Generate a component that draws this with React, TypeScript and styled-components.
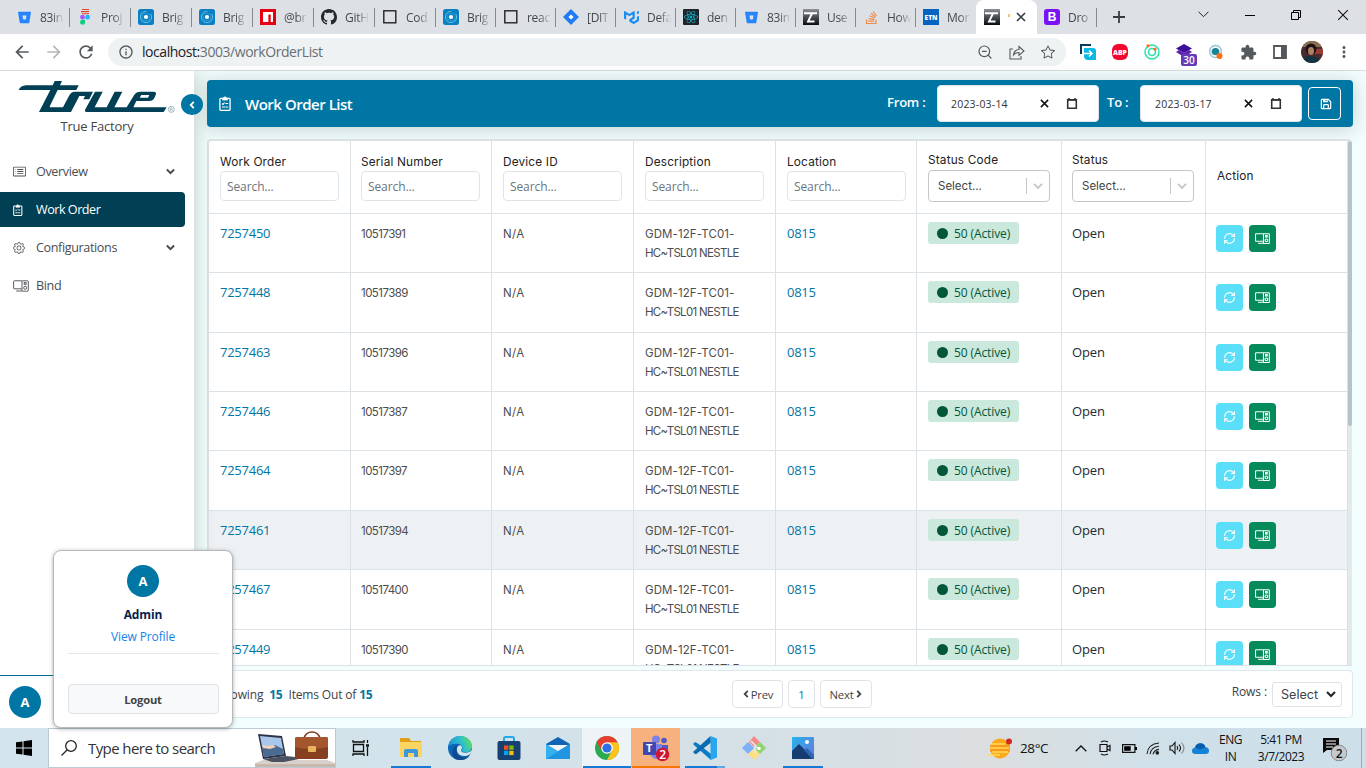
import React from "react";
import styled, { createGlobalStyle } from "styled-components";
import { BsCardList, BsGear, BsGithub, BsStar } from "react-icons/bs";
import { BiSave } from "react-icons/bi";
import { FaReact, FaStackOverflow } from "react-icons/fa";
import { LuRefreshCw, LuZoomOut } from "react-icons/lu";
import { MdArrowBack, MdArrowForward, MdRefresh, MdInfoOutline, MdExtension, MdMoreVert } from "react-icons/md";
import { SiBitbucket, SiMui } from "react-icons/si";

const GlobalStyle = createGlobalStyle`
  * { box-sizing: border-box; }
  body { margin: 0; font-family: "Open Sans", "Noto Sans", sans-serif; overflow: hidden; }
  button, input, select { font-family: inherit; margin: 0; }
  svg { display: block; flex: none; }
`;

const teal = "#0076a5";
const navy = "#003f54";
const line = "#dbe1e5";

const Screen = styled.div`
  width: 1366px; height: 768px; display: flex; flex-direction: column; overflow: hidden; background: #fff;
`;

/* ---------- browser ---------- */
const TabStrip = styled.div`
  height: 34px; flex: none; background: #dde0e5; display: flex; padding-left: 9px;
`;
const Tab = styled.div<{ $w: number; $active?: boolean; $line?: boolean }>`
  width: ${p => p.$w}px; height: 34px; display: flex; align-items: center; gap: 8px; padding-left: 7px;
  position: relative;
  ${p => p.$active && "background:#fff; border-radius: 8px 8px 0 0; padding-left: 8px;"}
  ${p => p.$line && `&::after { content: ""; position: absolute; right: 0; top: 8px; width: 1px; height: 19px; background: #85898e; }`}
`;
const TabTitle = styled.span`
  width: max-content; flex: none; white-space: nowrap; font-size: 12px; letter-spacing: -0.3px; color: #45494d;
  mask-image: linear-gradient(90deg, #000 12px, transparent 24px);
`;
const Fav = styled.span`
  width: 16px; height: 16px; display: flex; align-items: center; justify-content: center; flex: none;
`;
const EtnFav = styled(Fav)`background: #0664c1; color: #fff; font-size: 6.5px; font-weight: 800;`;
const BootFav = styled(Fav)`background: #7a12f5; color: #fff; font: 700 12px "Liberation Sans", sans-serif; border-radius: 3px;`;
const TabClose = styled.span`display: flex; margin-left: -3px;`;
const WinControls = styled.div`
  margin-left: auto; display: flex; height: 29px; align-items: center; padding-right: 17px; gap: 36px;
`;
const NewTab = styled.div`display: flex; align-items: center; padding-left: 16px;`;
const Toolbar = styled.div`
  height: 37px; flex: none; display: flex; align-items: center; background: #fff; border-bottom: 1px solid #d9dcdf;
  padding-left: 12px; color: #55595e;
`;
const NavIcons = styled.div`display: flex; gap: 12px; width: 96px;`;
const Omnibox = styled.div`
  width: 958px; height: 28px; border-radius: 14px; background: #eef2f3; display: flex; align-items: center; padding: 0 11px 0 10px;
  font-size: 14px;
`;
const Url = styled.span`margin: -1px 0 0 8px; color: #6a6f74; letter-spacing: -0.45px; flex: 1; b { font-weight: 400; color: #202124; }`;
const OmniIcons = styled.div`display: flex; gap: 16px; align-items: center;`;
const ExtRow = styled.div`display: flex; align-items: center; gap: 16px; margin-left: 14px;`;
const Abp = styled.span`
  width: 16px; height: 16px; border-radius: 6px; background: #f5062e; color: #fff; font-size: 6.8px; font-weight: 800;
  display: flex; align-items: center; justify-content: center;
`;
const LayerExt = styled.span`position: relative; width: 16px; height: 16px;`;
const ExtBadge = styled.span`
  position: absolute; left: 5px; top: 10px; width: 16px; height: 12px; background: #673ab7; color: #fff; font-size: 10px;
  font-weight: 600; line-height: 12px; text-align: center; border-radius: 2px;
`;
const Face = styled.span`
  width: 22px; height: 22px; border-radius: 50%; overflow: hidden; margin-left: -2px;
`;
const More = styled.span`margin-left: -4px;`;

/* ---------- app ---------- */
const AppArea = styled.div`height: 657px; flex: none; display: flex; background: #f2fdfd; position: relative;`;
const Sidebar = styled.aside`
  width: 194px; background: #fff; display: flex; flex-direction: column; box-shadow: 0 0 18px rgba(60, 80, 70, 0.3);
  position: relative; clip-path: inset(0 -40px 0 0);
`;
const LogoBox = styled.div`padding: 5px 0 0 12px; height: 46px;`;
const Factory = styled.div`text-align: center; font-size: 13px; line-height: 18px; color: #444; letter-spacing: -0.22px;`;
const Collapse = styled.button`
  position: absolute; left: 181px; top: 23px; width: 22px; height: 21px; border: 0; border-radius: 50%; background: ${teal};
  color: #fff; display: flex; align-items: center; justify-content: center; padding: 0; z-index: 2;
`;
const Nav = styled.nav`display: flex; flex-direction: column; gap: 3px; margin-top: 19px; flex: 1;`;
const NavItem = styled.a<{ $active?: boolean }>`
  height: 35px; width: 185px; display: flex; align-items: center; padding: 0 10px 0 13px; font-size: 12.6px;
  letter-spacing: ${p => (p.$active ? -0.48 : -0.38)}px;
  color: ${p => (p.$active ? "#fff" : "#4a4d50")}; background: ${p => (p.$active ? navy : "transparent")};
  border-radius: 0 4px 4px 0;
`;
const NavGlyph = styled.span`width: 23px; display: flex;`;
const NavLabel = styled.span`flex: 1; padding-bottom: 1px;`;
const SideFoot = styled.div`height: 53px; border-top: 1px solid #036c92; padding: 10px 9px;`;
const Avatar = styled.div`
  width: 32px; height: 32px; border-radius: 50%; background: ${teal}; color: #fff; font-weight: 700; font-size: 13px;
  display: flex; align-items: center; justify-content: center;
`;
const Popover = styled.div`
  position: absolute; left: 53px; top: 479px; width: 180px; height: 178px; background: #fff; border: 1px solid #b6b9bb;
  border-radius: 8px; box-shadow: 0 1px 4px rgba(0, 0, 0, 0.3); display: flex; flex-direction: column; align-items: center;
  padding: 14px 14px 0; z-index: 5;
`;
const PopName = styled.div`font-size: 12px; font-weight: 700; color: #0a1f4d; line-height: 18px; margin-top: 9px; letter-spacing: -0.1px;`;
const PopLink = styled.a`
  font-size: 12px; color: #1483ea; line-height: 18px; margin-top: 4px; padding-bottom: 7px; border-bottom: 1px solid #e4e7ea;
  width: 151px; text-align: center; letter-spacing: -0.12px;
`;
const Logout = styled.button`
  margin-top: 30px; width: 151px; height: 30px; border: 1px solid #dfe3e7; border-radius: 4px; background: #f8f9fb;
  font-size: 11.2px; font-weight: 700; color: #444; letter-spacing: -0.2px;
`;
const Main = styled.main`flex: 1; padding: 9px 13px 0; display: flex; flex-direction: column;`;
const Header = styled.header`
  height: 47px; flex: none; background: ${teal}; border-radius: 4px; display: flex; align-items: center; color: #fff;
  padding: 0 12px; box-shadow: 0 2px 18px rgba(60, 80, 70, 0.25); font-size: 15px;
`;
const Title = styled.h1`font-size: 15px; font-weight: 600; margin: 0 auto 0 14px; letter-spacing: -0.48px;`;
const DateLabel = styled.span<{ $w: number }>`width: ${p => p.$w}px; font-size: 13px; font-weight: 600; padding-bottom: 4px; letter-spacing: -0.2px;`;
const DateBox = styled.div<{ $gap: number; $pad: number }>`
  width: 162px; height: 37px; background: #fff; border: 1px solid #dfe5e8; border-radius: 4px; display: flex; align-items: center;
  color: #333; font-size: 10.5px; padding-left: ${p => p.$pad}px; margin-right: ${p => p.$gap}px; letter-spacing: 0.2px;
`;
const DateText = styled.span`width: 89px;`;
const DateIcon = styled.span`margin-left: 17px;`;
const SaveBtn = styled.button`
  width: 33px; height: 33px; border: 1px solid #fff; border-radius: 4px; background: transparent; color: #fff; display: flex;
  align-items: center; justify-content: center; padding: 0 0 0 2px;
`;
const TableCard = styled.div`
  margin: 12px 0 0; width: 1145px; height: 527px; flex: none; overflow: hidden; display: flex; background: #fff;
  border: 1px solid ${line}; border-width: 2px 0 1px 2px; border-radius: 4px 4px 0 0;
`;
const Scroll = styled.div`width: 5px; background: #e3eaec; border-left: 1px solid ${line};`;
const Thumb = styled.div`height: 285px; border-radius: 3px; background: #b5c4cb;`;
const Table = styled.div`flex: none; width: 1138px;`;
const Row = styled.div<{ $h: number; $shade?: boolean }>`
  display: grid; grid-template-columns: 142px 141px 142px 142px 141px 145px 144px 141px; height: ${p => p.$h}px;
  background: ${p => (p.$shade ? "#edf1f4" : "#fff")}; border-bottom: 1px solid ${line};
  & > :first-child, & > :nth-child(n + 3):nth-child(-n + 6) { padding-left: 11px; }
`;
const Cell = styled.div`
  border-right: 1px solid ${line}; padding: 10px 0 0 10px; line-height: 18.5px; font-size: 13px; color: #222b33;
`;
const LinkCell = styled(Cell)`color: ${teal}; letter-spacing: -0.25px;`;
const OpenCell = styled(Cell)`letter-spacing: -0.15px;`;
const GeoCell = styled(Cell)`
  padding-top: 11px; font-family: Inter, sans-serif; font-size: 11.5px; color: #4d4d4d;
`;
const GeoText = styled.div<{ $ls: number }>`letter-spacing: ${p => p.$ls}px; white-space: nowrap;`;
const HeadCell = styled(Cell)<{ $top: number; $last?: boolean }>`
  padding-top: ${p => p.$top}px; font-family: Inter, sans-serif; font-size: 11.8px; color: #222; line-height: 18px;
  letter-spacing: 0.18px;
  ${p => p.$last && "border-right: 0; padding-left: 11px;"}
`;
const Search = styled.div`
  width: 119px; height: 30px; border: 1px solid #e0e4e8; border-radius: 4px; font: 12px/30px "Open Sans", sans-serif;
  color: #6a757d; padding-left: 6px; letter-spacing: -0.1px;
`;
const Picker = styled.div`
  width: 122px; height: 32px; border: 1px solid #c4c6c8; border-radius: 4px; margin-top: 1px; display: flex; align-items: center;
  color: #444; font-size: 11.5px; padding-left: 9px; letter-spacing: 0;
`;
const PickerText = styled.span`flex: 1;`;
const PickerArrow = styled.span`height: 16px; border-left: 1px solid #c4c6c8; width: 23px; display: flex; align-items: center; justify-content: center; color: #c4c6c8;`;
const Badge = styled.span`
  display: flex; align-items: center; gap: 6px; width: 91px; height: 22px; background: #cae8dc; border-radius: 3px; color: #02573a;
  font-size: 12px; padding: 1px 0 0 9px; margin-top: -2px; letter-spacing: -0.1px;
`;
const BadgeText = styled.span`padding-top: 1px;`;
const Dot = styled.i`width: 11px; height: 11px; border-radius: 50%; background: #02573a;`;
const Actions = styled(Cell)`border-right: 0; display: flex; gap: 6px; padding-top: 11px;`;
const ActBtn = styled.button<{ $bg: string }>`
  width: 27px; height: 27px; border: 0; padding: 0; border-radius: 4px; background: ${p => p.$bg}; color: #fff; display: flex;
  align-items: center; justify-content: center;
`;
const FootBar = styled.footer`
  margin-top: 4px; height: 48px; flex: none; background: #fff; border: 1px solid #dfe7ea; border-radius: 4px; display: flex; align-items: center;
  padding: 0 10px 0 9px; font-size: 12px; color: #3c4248;
`;
const Count = styled.div`width: 515px; white-space: pre; letter-spacing: -0.16px; b { color: ${teal}; }`;
const Pager = styled.div`display: flex; gap: 5px; flex: 1;`;
const PageBtn = styled.button<{ $w: number; $c?: string }>`
  width: ${p => p.$w}px; height: 28px; background: #fff; border: 1px solid #e0e4e8; border-radius: 4px; padding: 0; font-size: 11.3px;
  color: ${p => p.$c || "#444"}; display: flex; align-items: center; justify-content: center; gap: 1px; letter-spacing: -0.2px;
`;
const RowsLabel = styled.span`margin: -5px 5px 0 0; font-size: 12px; letter-spacing: -0.1px;`;
const RowsSelect = styled.div`
  width: 70px; height: 25px; border: 1px solid #dfe3e7; border-radius: 3px; display: flex; align-items: center; gap: 8px;
  padding-left: 8px; font: 12.6px Inter, sans-serif; color: #3c4248;
`;

/* ---------- taskbar ---------- */
const Taskbar = styled.div`
  height: 40px; flex: none; display: flex; background: linear-gradient(90deg, #d3e4ed 0%, #d3e2e9 45%, #d6dfe4 62%, #dcdedf 72%, #cfe0e9 85%, #cddfe9 100%);
`;
const Start = styled.div`width: 48px; display: flex; align-items: center; justify-content: center;`;
const SearchBar = styled.div`
  width: 288px; background: #fff; border: 1px solid #bccad1; display: flex; align-items: center; font-size: 15px; color: #333;
  padding-left: 11px; letter-spacing: -0.58px; gap: 10px;
`;
const SearchText = styled.span`flex: 1; white-space: nowrap;`;
const TaskItem = styled.div<{ $w?: number; $bg?: string; $bar?: string; $barW?: number }>`
  width: ${p => p.$w || 49}px; display: flex; align-items: center; justify-content: center; position: relative;
  background: ${p => p.$bg || "transparent"};
  ${p => p.$bar && `&::after { content: ""; position: absolute; bottom: 0; left: calc(50% - ${(p.$barW || 40) / 2}px); width: ${p.$barW || 40}px; height: 2px; background: ${p.$bar}; }`}
`;
const Tray = styled.div`margin-left: auto; display: flex; align-items: center; color: #111; font-size: 12px;`;
const TrayIcon = styled.span<{ $w: number }>`width: ${p => p.$w}px; display: flex; justify-content: center;`;
const Temp = styled.span`font-size: 13.5px; letter-spacing: -0.4px; width: 49px; margin-left: 4px;`;
const TwoLine = styled.div<{ $w: number }>`width: ${p => p.$w}px; text-align: center; line-height: 17px; letter-spacing: -0.45px; font-size: 12px;`;
const ShowDesk = styled.div`width: 5px; height: 40px; border-left: 1px solid #9dabb2; margin-left: 7px;`;

/* ---------- drawings ---------- */
const Ring = () => (
  <svg width="16" height="16" viewBox="0 0 16 16">
    <rect width="16" height="16" rx="2.5" fill="#0a7fc2" />
    <circle cx="8" cy="8" r="5.6" fill="none" stroke="#6cc3ea" strokeWidth=".9" strokeDasharray="26 5" />
    <circle cx="8" cy="8" r="3.8" fill="none" stroke="#2f9fd6" strokeWidth=".8" />
    <circle cx="8" cy="8" r="2.1" fill="#fff" />
  </svg>
);
const Figma = () => (
  <svg width="12" height="16" viewBox="0 0 12 16">
    <path d="M3 .5h7M2 2.6h8M3 4.7h7" stroke="#e2432a" strokeWidth="1.1" />
    <circle cx="3.5" cy="8.2" r="2.4" fill="#a259ff" /><circle cx="8.6" cy="8.2" r="2.4" fill="#1abcfe" />
    <path d="M3.5 10.8H6v2.6a2.5 2.5 0 1 1-2.5-2.6z" fill="#0acf83" />
  </svg>
);
const Npm = () => (
  <svg width="16" height="16" viewBox="0 0 16 16"><rect width="16" height="16" fill="#e60012" /><path d="M3 3h10v10h-2.3V5.6H8.4V13H3z" fill="#fff" /></svg>
);
const Square = () => (
  <svg width="16" height="16" viewBox="0 0 16 16"><rect x="1.8" y="1.8" width="12" height="12" fill="none" stroke="#222" strokeWidth="1.4" /></svg>
);
const Jira = () => (
  <svg width="16" height="16" viewBox="0 0 16 16"><path d="M8 0l8 8-8 8-8-8z" fill="#1f7cf5" /><path d="M8 5.4L10.6 8 8 10.6 5.4 8z" fill="#fff" /></svg>
);
const Zee = () => (
  <svg width="16" height="16" viewBox="0 0 16 16">
    <defs><linearGradient id="zg" x1="0" y1="0" x2="0" y2="1"><stop offset="0" stopColor="#8d9195" /><stop offset="1" stopColor="#080b10" /></linearGradient></defs>
    <rect width="16" height="16" fill="url(#zg)" /><path d="M1 4.3h13M9.5 3.5L5 12.5h6.5" fill="none" stroke="#fff" strokeWidth="1.9" />
  </svg>
);
const ReactFav = () => (
  <svg width="16" height="16" viewBox="0 0 16 16"><rect width="16" height="16" rx="1" fill="#20232a" /><g transform="translate(1 1)"><FaReact size={14} color="#12b5c9" /></g></svg>
);

const TrueLogo = () => (
  <svg width="170" height="42" viewBox="0 0 510 126">
    <path d="M20 42Q26 29 42 28H122L128 15H150L144 28H200L193 42H137L114 89Q111 94 118 94H153L172 58Q177 48 188 47H243L232 70H214L219 60H202L177 108H81L115 42Z" fill={navy} />
    <path d="M249 47H272L248 94H284L308 47H331L307 94H344L367 56Q373 47 385 47H424Q435 47 431 57L427 66Q423 75 411 75H373L364 94H464L455 108H224Q216 108 220 100Z" fill={navy} />
    <path d="M383 65L388 57H412L408 65Z" fill="#fff" />
    <circle cx="478" cy="100" r="9" fill="none" stroke="#6b929f" strokeWidth="2" />
    <path d="M475 105v-9h4q3 2 0 4h-4m4 0l3 5" fill="none" stroke="#6b929f" strokeWidth="1.6" />
  </svg>
);
const Clipboard = ({ h }: { h: number }) => (
  <svg width={h * 0.8} height={h} viewBox="0 0 12 15" fill="none" stroke="currentColor" strokeWidth="1.3">
    <path d="M3 2.4H1.700Q.9 2.400.9 3.200V13.500Q.9 14.300 1.700 14.300H10.300Q11.100 14.300 11.100 13.500V3.200Q11.100 2.400 10.300 2.400H9" />
    <path d="M3.600 1.800H5L6 .600 7 1.800H8.400V4H3.600z" fill="currentColor" strokeWidth=".8" />
    <path d="M3 7.600l1 .8 1.600-1.900M6.400 7.500H9.200M3 11h3M6.400 11H9.200" strokeWidth="1.100" />
  </svg>
);
const Chev = ({ dir, s }: { dir: "left" | "right" | "down"; s: number }) => (
  <svg width={s} height={s} viewBox="0 0 8 8">
    <path d={dir === "left" ? "M5.800.900L2.700 4l3.100 3.100" : dir === "right" ? "M2.200.900L5.300 4 2.200 7.100" : "M.800 2.300L4 5.500l3.200-3.200"} fill="none" stroke="currentColor" strokeWidth="1.800" />
  </svg>
);
const PcIcon = ({ w = 16, heavy = false }: { w?: number; heavy?: boolean }) => (
  <svg width={w} height={w * 0.75} viewBox="0 0 16 12" fill="none" stroke="currentColor" strokeWidth={heavy ? 1.1 : 0.9}>
    <path d="M8.800 8.800H1.200Q.6 8.800.6 8.200V1.400Q.6.8 1.200.8H9M3.200 11H9" />
    <rect x="9" y=".8" width="6.3" height="10.4" rx=".6" /><rect x="11.2" y="2.6" width="1.9" height="1.700" /><circle cx="12.15" cy="7.800" r="1.500" />
  </svg>
);
const Cross = ({ s, c, w = 1.3 }: { s: number; c: string; w?: number }) => (
  <svg width={s} height={s} viewBox="0 0 10 10"><path d="M1 1l8 8M9 1L1 9" stroke={c} strokeWidth={w} /></svg>
);
const CalIcon = () => (
  <svg width="12" height="12" viewBox="0 0 12 12"><path d="M1.700 1.700h8.600v8.600H1.700z" fill="none" stroke="#333" strokeWidth="1.600" /><path d="M1 2h10M3 0v2M9 0v2" stroke="#333" strokeWidth="1.500" /></svg>
);
const LogoBag = () => (
  <svg width="80" height="38" viewBox="0 0 80 38">
    <path d="M0 34L8 31H72L80 34V38H0z" fill="#d9d0c9" /><path d="M0 35h80v3H0z" fill="#c6b8ad" />
    <path d="M3 5L27 7 31 27 8 30z" fill="#2e3346" /><path d="M5 7L26 9 29 25 9 28z" fill="#a9c7ea" />
    <path d="M7 17l7 2 6-3 8 4 1 5-20 3z" fill="#4a6a91" /><path d="M7 16l6 1 5-1 3 2-6 2-7-1z" fill="#f0d2bd" />
    <path d="M8 30l23-3 18 2-20 4H17z" fill="#4b5160" />
    <path d="M49 9q2-6 8-6t8 6" fill="none" stroke="#7a3a20" strokeWidth="1.7" />
    <rect x="40" y="8" width="33" height="22" rx="2" fill="#87401f" /><path d="M40 10q0-2 2-2h29q2 0 2 2v8q-16 4-33 0z" fill="#a4562f" />
    <rect x="53" y="17" width="8" height="6" rx="1" fill="#e8b45c" />
  </svg>
);
const Folder = () => (
  <svg width="24" height="24" viewBox="0 0 24 24"><path d="M1 2h9l2 3h10v4H1z" fill="#dfa016" /><path d="M1 6h22v15H1z" fill="#fcd462" /><path d="M5 21v-6q0-2 2-2h10q2 0 2 2v6h-4v-4H9v4z" fill="#3c97dc" /></svg>
);
const Edge = () => (
  <svg width="24" height="24" viewBox="0 0 24 24">
    <defs><linearGradient id="eg" x1="0" y1=".6" x2="1" y2=".3"><stop offset="0" stopColor="#1b8fdc" /><stop offset=".6" stopColor="#2fc3c9" /><stop offset="1" stopColor="#6bdc4f" /></linearGradient></defs>
    <circle cx="12" cy="12" r="12" fill="#0c66b8" />
    <path d="M.3 10.5C1.2 4.2 6 0 12 0c7 0 12 4.700 12 10.200 0 4-3 6-6.500 6-3 0-4.300-1-3.500-2.200C15.600 11.600 14 8 9.500 7.800 4.500 7.600 1.400 9 .3 10.500z" fill="url(#eg)" />
    <path d="M8.200 13c-.500 5 3.500 9 8.500 8.500 2-.2 4-1.200 5.300-2.500-2.500 4-6 5-10 5C6 24 3.500 19 4.500 14.500 5.500 11 8.500 9 10.500 8.500 9 9.600 8.400 11 8.200 13z" fill="#114a8b" />
    <path d="M9 12.500c.4-3 3-4 4.500-2.500 1.300 1.600 0 3-.3 4-.4 1.500 1 2.700 4.300 2.700 3 0 5-.9 6-2.700l.5 1.500c-1.500 3-4.500 4.800-8 4.500C11.500 20 8.500 17 9 12.500z" fill="#d7e4ea" />
  </svg>
);
const Store = () => (
  <svg width="24" height="24" viewBox="0 0 24 24"><path d="M7 7V2.500Q7 1 8.500 1h7Q17 1 17 2.500V7" fill="none" stroke="#24a9e6" strokeWidth="2" /><rect x=".5" y="5" width="23" height="19" rx="2" fill="#16406f" /><path d="M7 9.500h4.300v4.300H7z" fill="#f25022" /><path d="M12.300 9.500h4.300v4.300h-4.300z" fill="#7fba00" /><path d="M7 14.800h4.300v4.300H7z" fill="#00a4ef" /><path d="M12.300 14.800h4.300v4.300h-4.300z" fill="#ffb900" /></svg>
);
const Mail = () => (
  <svg width="24" height="24" viewBox="0 0 24 24"><path d="M0 8L12 1l12 7v15H0z" fill="#1065b5" /><path d="M2.500 9h19v8h-19z" fill="#f3f5f6" /><path d="M0 8l12 7L24 8v15H0z" fill="#35b0ee" /><path d="M0 23L24 8v15z" fill="#2196e0" /></svg>
);
const Chrome = () => (
  <svg width="24" height="24" viewBox="0 0 24 24"><circle cx="12" cy="12" r="12" fill="#2da94f" /><path d="M22.400 6A12 12 0 0 1 12 24l5-9.500L17 9l-5-3z" fill="#fcc31e" /><path d="M12 6.200h10.500A12 12 0 0 0 1.600 6l5 8.800z" fill="#e53e30" /><circle cx="12" cy="12" r="5.800" fill="#fff" /><circle cx="12" cy="12" r="4.600" fill="#2d6fe4" /></svg>
);
const Teams = () => (
  <svg width="28" height="28" viewBox="0 0 28 28"><circle cx="14" cy="5.500" r="4" fill="#7b83eb" /><circle cx="22" cy="6.500" r="2.800" fill="#5059c9" /><path d="M18 11h8v9h-6z" fill="#5059c9" /><path d="M9 10h11v9q-1 6-6 6-4-1-5-4z" fill="#7b83eb" /><rect x="1" y="8" width="13" height="13" rx="1" fill="#4048b0" /><text x="4" y="18.300" fontSize="11" fontWeight="700" fill="#fff" fontFamily="Open Sans">T</text><circle cx="20.500" cy="20.500" r="6.800" fill="#cc1736" /><text x="17.200" y="25" fontSize="12" fontWeight="600" fill="#fff" fontFamily="Open Sans">2</text></svg>
);
const Code = () => (
  <svg width="24" height="24" viewBox="0 0 24 24"><path d="M0 8l2-2 3 1.500L18 18v6L2 10z" fill="#0a7dc8" /><path d="M0 16L17.500 0 18 6.500 3 18.300 2 18z" fill="#0b6bb0" /><path d="M17.500 0L24 2.500v19L17.500 24z" fill="#2aa5ee" /></svg>
);
const GitIcon = () => (
  <svg width="24" height="24" viewBox="0 0 24 24"><path d="M12 0l6 6-6 5-5-5z" fill="#f58a86" /><path d="M6 6l6 6-6 6-6-6z" fill="#7fb0f7" /><path d="M18 6l6 6-6 6-6-6z" fill="#8fd46d" /><path d="M12 13l6 5-6 6-6-6z" fill="#fbdf82" /><path d="M9 5l4 4v8M13 10l4 3" stroke="#e9eef0" strokeWidth="1.500" fill="none" /><circle cx="17" cy="12.500" r="1.800" fill="#fff" /></svg>
);
const Photos = () => (
  <svg width="22" height="22" viewBox="0 0 22 22"><defs><linearGradient id="pg" x2="1" y2="1"><stop offset="0" stopColor="#27b3ec" /><stop offset="1" stopColor="#6a74dc" /></linearGradient></defs><rect width="22" height="22" rx="1" fill="url(#pg)" /><path d="M0 14l7-7 15 15H0z" fill="#173c72" /><path d="M12 13l3-2 7 7v4h-2z" fill="#2c66b4" /><circle cx="15" cy="5" r="2" fill="#fff" /></svg>
);

const tabs: [number, React.ReactNode, string][] = [
  [61, <SiBitbucket size={13} color="#2684ff" />, "83in"],
  [61, <Figma />, "Proj"],
  [61, <Ring />, "Brig"],
  [61, <Ring />, "Brig"],
  [61, <Npm />, "@br"],
  [61, <BsGithub size={16} color="#24292e" />, "GitH"],
  [61, <Square />, "Cod"],
  [60, <Ring />, "Brig"],
  [60, <Square />, "reac"],
  [60, <Jira />, "[DIT"],
  [60, <SiMui size={15} color="#1a8cf5" />, "Defa"],
  [60, <ReactFav />, "den"],
  [60, <SiBitbucket size={13} color="#2684ff" />, "83in"],
  [60, <Zee />, "Use"],
  [60, <FaStackOverflow size={15} color="#ef8b4b" />, "How"],
  [60, <EtnFav>ETN</EtnFav>, "Mor"],
];
const orders = ["7257450 10517391", "7257448 10517389", "7257463 10517396", "7257446 10517387", "7257464 10517397", "7257461 10517394", "7257467 10517400", "7257449 10517390"].map(s => s.split(" "));
const heights = [59, 60, 59, 59, 60, 59, 60, 59];

const Browser = () => (
  <>
    <TabStrip>
      {tabs.map(([w, icon, title], i) => (
        <Tab key={i} $w={w} $line={i < 15}><Fav>{icon}</Fav><TabTitle>{title}</TabTitle></Tab>
      ))}
      <Tab $w={61} $active><Fav><Zee /></Fav><svg width="3" height="6" viewBox="0 0 3 6"><path d="M1 0v3" stroke="#f0a030" strokeWidth="1.300" /></svg><TabClose><Cross s={10} c="#3c4043" w={1.700} /></TabClose></Tab>
      <Tab $w={60} $line><Fav><BootFav>B</BootFav></Fav><TabTitle>Dro</TabTitle></Tab>
      <NewTab><svg width="12" height="12" viewBox="0 0 12 12"><path d="M6 0v12M0 6h12" stroke="#3a3d40" strokeWidth="1.800" /></svg></NewTab>
      <WinControls>
        <svg width="11" height="7" viewBox="0 0 11 7"><path d="M.5.700l5 5 5-5" fill="none" stroke="#222" /></svg>
        <svg width="10" height="10" viewBox="0 0 10 10"><path d="M0 5.500h10" stroke="#000" /></svg>
        <svg width="10" height="10" viewBox="0 0 10 10"><path d="M.5 2.500h7v7h-7zM2.500 2.500v-2h7v7h-2" fill="none" stroke="#000" /></svg>
        <Cross s={12} c="#111" w={0.900} />
      </WinControls>
    </TabStrip>
    <Toolbar>
      <NavIcons><MdArrowBack size={20} /><MdArrowForward size={20} color="#b5b8bb" /><MdRefresh size={20} /></NavIcons>
      <Omnibox>
        <MdInfoOutline size={16} /><Url><b>localhost:</b>3003/workOrderList</Url>
        <OmniIcons>
          <LuZoomOut size={16} strokeWidth={1.800} />
          <svg width="16" height="15" viewBox="0 0 16 15" fill="none" stroke="currentColor" strokeWidth="1.100"><path d="M4 4H1v10h11v-3M4.500 10q.500-5 5.500-5.500V1.500L15 6l-5 4.300V7.500Q6.500 7.500 4.500 10z" /></svg>
          <BsStar size={14} />
        </OmniIcons>
      </Omnibox>
      <ExtRow>
        <svg width="16" height="16" viewBox="0 0 16 16"><path d="M1 10V1h10" fill="none" stroke="#073c5a" strokeWidth="2" /><path d="M4 4h9q3 0 3 3v9H7q-3-1-3-4z" fill="#0cb9e0" /><path d="M4 9.500h8M9 6.500l3 3-3 3" fill="none" stroke="#fff" strokeWidth="1.500" /></svg>
        <Abp>ABP</Abp>
        <svg width="16" height="16" viewBox="0 0 16 16" fill="none" stroke="#2ee0ae"><circle cx="8" cy="8" r="7" strokeWidth="1.500" /><circle cx="8" cy="8" r="3.500" strokeWidth="1.700" /><circle cx="4" cy="1.800" r="1.600" fill="#ff6a1f" stroke="none" /><circle cx="11" cy="5" r="1.600" fill="#ff6a1f" stroke="none" /></svg>
        <LayerExt><svg width="16" height="16" viewBox="0 0 16 16"><path d="M8 0l8 4.500L8 9 0 4.500z" fill="#3d0d9e" /><path d="M0 8l3-2 5 3 5-3 3 2-8 5z" fill="#5b21b0" /></svg><ExtBadge>30</ExtBadge></LayerExt>
        <svg width="16" height="16" viewBox="0 0 16 16"><circle cx="7.500" cy="7.500" r="6" fill="none" stroke="#8fc8d2" strokeWidth="1.300" /><path d="M1 8q6-8 13 0-7 7-13 0z" fill="#bfe0e6" /><circle cx="7.500" cy="7.500" r="3.600" fill="#1a8296" /><circle cx="11.500" cy="12" r="3" fill="#ff6c12" /></svg>
        <MdExtension size={17} />
        <svg width="14" height="14" viewBox="0 0 14 14"><path d="M1 1h12v12H1z" fill="none" stroke="#54585d" strokeWidth="1.800" /><path d="M8 1h5v12H8z" fill="#54585d" /></svg>
        <Face><svg width="22" height="22" viewBox="0 0 22 22"><rect width="22" height="22" fill="#4a2a2c" /><path d="M0 0h22v6H0z" fill="#8b7050" /><path d="M14 8h8v5h-8z" fill="#9c3b32" /><circle cx="10" cy="8" r="5.500" fill="#1a1418" /><ellipse cx="10" cy="10" rx="3" ry="4" fill="#b08063" /><path d="M1 22q2-9 8-7 9 0 10 7z" fill="#123340" /></svg></Face>
        <More><MdMoreVert size={18} /></More>
      </ExtRow>
    </Toolbar>
  </>
);

const Side = () => (
  <Sidebar>
    <LogoBox><TrueLogo /></LogoBox>
    <Factory>True Factory</Factory>
    <Nav>
      <NavItem><NavGlyph><BsCardList size={13} /></NavGlyph><NavLabel>Overview</NavLabel><Chev dir="down" s={9} /></NavItem>
      <NavItem $active><NavGlyph><Clipboard h={12} /></NavGlyph><NavLabel>Work Order</NavLabel></NavItem>
      <NavItem><NavGlyph><BsGear size={12} /></NavGlyph><NavLabel>Configurations</NavLabel><Chev dir="down" s={9} /></NavItem>
      <NavItem><NavGlyph><PcIcon w={16} /></NavGlyph><NavLabel>Bind</NavLabel></NavItem>
    </Nav>
    <SideFoot><Avatar>A</Avatar></SideFoot>
  </Sidebar>
);

const searchable = ["Work Order", "Serial Number", "Device ID", "Description", "Location"];

const OrderTable = () => (
  <TableCard>
    <Table>
      <Row $h={73}>
        {searchable.map(h => <HeadCell key={h} $top={12}>{h}<Search>Search...</Search></HeadCell>)}
        {["Status Code", "Status"].map(h => (
          <HeadCell key={h} $top={10}>{h}
            <Picker><PickerText>Select...</PickerText><PickerArrow><svg width="10" height="6" viewBox="0 0 10 6"><path d="M1 1l4 4 4-4" fill="none" stroke="currentColor" strokeWidth="1.800" /></svg></PickerArrow></Picker>
          </HeadCell>
        ))}
        <HeadCell $top={26} $last>Action</HeadCell>
      </Row>
      {orders.map(([id, serial], i) => (
        <Row key={id} $h={heights[i]} $shade={i === 5}>
          <LinkCell>{id}</LinkCell>
          <GeoCell><GeoText $ls={-0.55}>{serial}</GeoText></GeoCell>
          <GeoCell><GeoText $ls={0.4}>N/A</GeoText></GeoCell>
          <GeoCell><GeoText $ls={0.1}>GDM-12F-TC01-</GeoText><GeoText $ls={-0.68}>HC~TSL01 NESTLE</GeoText></GeoCell>
          <LinkCell>0815</LinkCell>
          <Cell><Badge><Dot /><BadgeText>50 (Active)</BadgeText></Badge></Cell>
          <OpenCell>Open</OpenCell>
          <Actions>
            <ActBtn $bg="#5bdff8"><LuRefreshCw size={13} /></ActBtn>
            <ActBtn $bg="#048a5b"><PcIcon w={15} heavy /></ActBtn>
          </Actions>
        </Row>
      ))}
    </Table>
    <Scroll><Thumb /></Scroll>
  </TableCard>
);

const Task = () => (
  <Taskbar>
    <Start><svg width="16" height="16" viewBox="0 0 16 16"><path d="M0 2.300L6.500 1.400v6.100H0zM7.500 1.200L16 0v7.500H7.500zM0 8.500h6.500v6.100L0 13.700zM7.500 8.500H16V16l-8.500-1.200z" fill="#000" /></svg></Start>
    <SearchBar>
      <svg width="18" height="18" viewBox="0 0 18 18"><circle cx="11" cy="7" r="5.300" fill="none" stroke="#222" strokeWidth="1.300" /><path d="M7 11L1.500 16.500" stroke="#222" strokeWidth="1.300" /></svg>
      <SearchText>Type here to search</SearchText><LogoBag />
    </SearchBar>
    <TaskItem $w={50}><svg width="18" height="16" viewBox="0 0 18 16" fill="none" stroke="#111" strokeWidth="1.300"><path d="M1.500 4.500h10v7h-10zM1 0v2h11V0M1 16v-2h11v2M15.500 0v3M15.500 7v9" /><path d="M14 5.500h3" strokeWidth="2.500" /></svg></TaskItem>
    <TaskItem $bar="#1679d4"><Folder /></TaskItem>
    <TaskItem><Edge /></TaskItem>
    <TaskItem><Store /></TaskItem>
    <TaskItem><Mail /></TaskItem>
    <TaskItem $w={49} $bg="#edf3f6" $bar="#1679d4" $barW={48}><Chrome /></TaskItem>
    <TaskItem $w={49} $bg="#f7b17c" $bar="#f57600" $barW={48}><Teams /></TaskItem>
    <TaskItem $bar="linear-gradient(90deg,#1679d4 80%,#62a7e2 80%)"><Code /></TaskItem>
    <TaskItem><GitIcon /></TaskItem>
    <TaskItem $bar="#1679d4"><Photos /></TaskItem>
    <Tray>
      <TrayIcon $w={32}><svg width="24" height="21" viewBox="0 0 24 21"><circle cx="12" cy="10.500" r="10" fill="#fba81c" /><path d="M2 7h20v7H2z" fill="#f98f1a" opacity=".6" /><path d="M3 6h14M1 10h20M4 14h16M0 17h12" stroke="#ffd95a" strokeWidth="1.300" /><circle cx="21" cy="3.500" r="3" fill="#cf2a20" /></svg></TrayIcon>
      <Temp>28°C</Temp>
      <TrayIcon $w={24}><svg width="12" height="7" viewBox="0 0 12 7"><path d="M.700 6.300L6 1l5.300 5.300" fill="none" stroke="#111" strokeWidth="1.300" /></svg></TrayIcon>
      <TrayIcon $w={24}><svg width="12" height="16" viewBox="0 0 12 16" fill="none" stroke="#111" strokeWidth="1.200"><path d="M1 4.500h7v7H1zM8 7l3-1.500v5L8 9M2 2q3-2 7 0M2 14q3 2 7 0" /></svg></TrayIcon>
      <TrayIcon $w={24}><svg width="15" height="9" viewBox="0 0 15 9"><path d="M.600.600h12.300v7.800H.600z" fill="none" stroke="#111" strokeWidth="1.200" /><path d="M2.200 2.200h6.500v4.600H2.200zM13 3h2v3h-2z" /></svg></TrayIcon>
      <TrayIcon $w={24}><svg width="14" height="13" viewBox="0 0 14 13" fill="none" stroke="#222" strokeWidth="1.100"><path d="M1 12Q2 2 13 1M4 12.300Q5 5 13 4.200M7 12.300Q8 8 13 7.400" /><circle cx="11.300" cy="10.800" r="1.300" fill="#111" /></svg></TrayIcon>
      <TrayIcon $w={23}><svg width="16" height="14" viewBox="0 0 16 14" fill="none" stroke="#111" strokeWidth="1.100"><path d="M1 5h2l3-3.500v11L3 9H1zM8 5q1.500 2 0 4M10 3.500q3 3.500 0 7" /><path d="M12.500 1.500q5 5.500 0 11" stroke="#888" /></svg></TrayIcon>
      <TrayIcon $w={24}><svg width="17" height="11" viewBox="0 0 17 11"><path d="M3.500 11Q0 11 0 7.700 0 5 3 4.400 4.500 0 9 .200q3.500.500 4.500 4Q17 4.500 17 7.800 17 11 13.500 11z" fill="#1482d6" /><path d="M3 4.400Q4.500 0 9 .200q3.500.500 4.500 4L8 6.500z" fill="#0a5cae" /></svg></TrayIcon>
      <TwoLine $w={37}>ENG<br />IN</TwoLine>
      <TwoLine $w={64}>5:41 PM<br />3/7/2023</TwoLine>
      <TrayIcon $w={41}><svg width="26" height="26" viewBox="0 0 26 26"><path d="M2 3h16v12H6l-4 3z" fill="#0a0a0a" /><path d="M5 6h10M5 9h10M5 12h7" stroke="#fff" strokeWidth="1.100" /><circle cx="18" cy="18" r="7.800" fill="#c3c9cd" stroke="#84898c" /><text x="14.700" y="22.500" fontSize="12" fontWeight="600" fill="#111" fontFamily="Open Sans">2</text></svg></TrayIcon>
      <ShowDesk />
    </Tray>
  </Taskbar>
);

export default function App() {
  return (
    <Screen>
      <GlobalStyle />
      <Browser />
      <AppArea>
        <Side />
        <Main>
          <Header>
            <Clipboard h={15} /><Title>Work Order List</Title>
            <DateLabel $w={50}>From :</DateLabel>
            <DateBox $gap={8} $pad={13}><DateText>2023-03-14</DateText><Cross s={9} c="#111" w={1.700} /><DateIcon><CalIcon /></DateIcon></DateBox>
            <DateLabel $w={33}>To :</DateLabel>
            <DateBox $gap={6} $pad={14}><DateText>2023-03-17</DateText><Cross s={9} c="#111" w={1.700} /><DateIcon><CalIcon /></DateIcon></DateBox>
            <SaveBtn><BiSave size={14} /></SaveBtn>
          </Header>
          <OrderTable />
          <FootBar>
            <Count>Showing  <b>15</b>  Items Out of <b>15</b></Count>
            <Pager>
              <PageBtn $w={51}><Chev dir="left" s={8} />Prev</PageBtn>
              <PageBtn $w={27} $c={teal}>1</PageBtn>
              <PageBtn $w={52}>Next<Chev dir="right" s={8} /></PageBtn>
            </Pager>
            <RowsLabel>Rows :</RowsLabel>
            <RowsSelect>Select<svg width="10" height="7" viewBox="0 0 10 7"><path d="M1 1l4 4 4-4" fill="none" stroke="#222" strokeWidth="2" /></svg></RowsSelect>
          </FootBar>
        </Main>
        <Collapse><Chev dir="left" s={8} /></Collapse>
        <Popover>
          <Avatar>A</Avatar>
          <PopName>Admin</PopName>
          <PopLink>View Profile</PopLink>
          <Logout>Logout</Logout>
        </Popover>
      </AppArea>
      <Task />
    </Screen>
  );
}
